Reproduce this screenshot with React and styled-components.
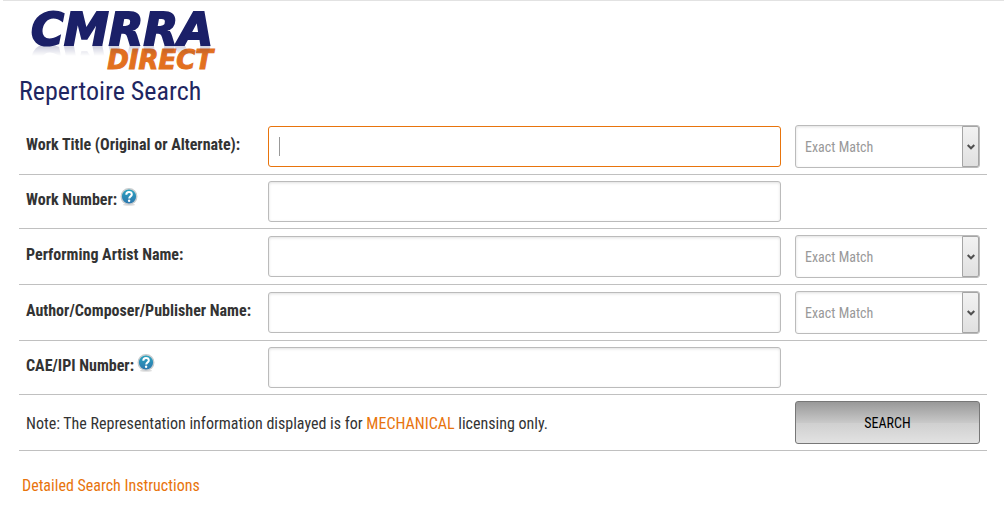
import React, { useState } from 'react';
import styled, { createGlobalStyle } from 'styled-components';

const GlobalStyle = createGlobalStyle`
  * {
    box-sizing: border-box;
  }
  body {
    margin: 0;
    background: #fff;
    color: #333;
    font-family: "Roboto Condensed", Roboto, sans-serif;
    font-size: 16px;
    line-height: 20px;
  }
  input, select, button {
    font-family: inherit;
  }
`;

const Page = styled.main`
  margin-left: 3px;
  padding: 12px 17px 32px 16px;
  border-top: 1px solid #e2e2e2;
`;

const Logo = styled.div`
  display: flex;
  flex-direction: column;
  align-items: flex-end;
  gap: 3px;
  width: 194px;
  height: 59px;
  font-family: "DejaVu Sans", sans-serif;
  font-style: italic;
  font-weight: bold;
`;

const LogoName = styled.span`
  height: 34px;
  color: #1b2068;
  font-size: 45px;
  line-height: 34px;
  -webkit-text-stroke: 2px #1b2068;
  -webkit-box-reflect: below -3px linear-gradient(transparent 65%, rgba(0, 0, 0, 0.25));
`;

const LogoProduct = styled.span`
  color: #e2701f;
  font-size: 26px;
  line-height: 21px;
  -webkit-text-stroke: 1px #e2701f;
`;

const Title = styled.h1`
  margin: 4px 0 13px;
  color: #1f2661;
  font-size: 26px;
  font-weight: 400;
  line-height: 30px;
`;

const Row = styled.div`
  display: grid;
  grid-template-columns: 228px 1fr 185px;
  column-gap: 14px;
  align-items: center;
  padding: 6px 7px;
  border-bottom: 1px solid #c0c0c0;
`;

const LabelCell = styled.div`
  display: flex;
  align-items: flex-start;
  gap: 3px;
  height: 27px;
  font-weight: 700;
  white-space: nowrap;

  label {
    padding-top: 2px;
  }
`;

const TextInput = styled.input`
  width: 100%;
  height: 41px;
  padding: 0 10px;
  border: 1px solid #bbb;
  border-radius: 3px;
  outline: none;
  background: #fff;
  box-shadow: inset 0 1px 3px rgba(0, 0, 0, 0.12);
  color: #333;
  font-size: 15px;

  &:focus {
    border-color: #e8740c;
    box-shadow: none;
  }
  &:focus:placeholder-shown {
    background: linear-gradient(#999, #999) 10px center / 1px 19px no-repeat #fff;
    caret-color: transparent;
  }
`;

const SelectBox = styled.div`
  display: grid;
  height: 43px;
  border: 1px solid #bbb;
  border-radius: 3px;
  background: #fff;
  box-shadow: inset 0 1px 3px rgba(0, 0, 0, 0.12);

  > * {
    grid-area: 1 / 1;
  }
`;

const Select = styled.select`
  appearance: none;
  width: 100%;
  padding: 0 28px 0 9px;
  border: 0;
  background: transparent;
  color: #999;
  font-size: 14px;
`;

const SelectArrow = styled.span`
  display: flex;
  align-items: center;
  justify-content: center;
  justify-self: end;
  width: 17px;
  border: 1px solid #a5a5a5;
  border-radius: 0 2px 2px 0;
  background: linear-gradient(#f2f2f2, #e0e0e0);
  pointer-events: none;
`;

const Note = styled.p`
  grid-column: 1 / 3;
  margin: 0;
  padding-top: 2px;
`;

const Highlight = styled.span`
  color: #e8740c;
`;

const SearchButton = styled.button`
  height: 43px;
  border: 1px solid #777;
  border-radius: 3px;
  background: linear-gradient(#999, #c8c8c8 50%, #cfcfcf 50%, #e2e2e2);
  color: #000;
  font-size: 14px;
  cursor: pointer;
`;

const Instructions = styled.a`
  display: inline-block;
  margin: 25px 3px 0;
  color: #e8740c;
  text-decoration: none;
`;

const HelpIcon = () => (
  <svg width="18" height="18" viewBox="0 0 18 18" role="img" aria-label="Help">
    <defs>
      <linearGradient id="help" x1="0" y1="0" x2="0" y2="1">
        <stop offset="0" stopColor="#2ba5c0" />
        <stop offset="1" stopColor="#2d74ad" />
      </linearGradient>
    </defs>
    <ellipse cx="9" cy="16.8" rx="6" ry="1" fill="#ddd" />
    <circle cx="9" cy="8.5" r="7.8" fill="url(#help)" stroke="#c9cdcf" strokeWidth="1.4" />
    <path
      d="M6.3 6.7C6.3 4.9 7.4 4 9 4s2.8.9 2.8 2.4c0 1.9-2.6 2-2.6 4"
      fill="none"
      stroke="#fff"
      strokeWidth="2"
    />
    <circle cx="9.1" cy="12.7" r="1.2" fill="#fff" />
  </svg>
);

const fields = [
  { id: "title", label: "Work Title (Original or Alternate):", match: true },
  { id: "number", label: "Work Number:", help: true },
  { id: "artist", label: "Performing Artist Name:", match: true },
  { id: "author", label: "Author/Composer/Publisher Name:", match: true },
  { id: "ipi", label: "CAE/IPI Number:", help: true }
];

const MatchSelect = ({ label }) => (
  <SelectBox>
    <Select aria-label={`${label} match type`}>
      <option>Exact Match</option>
      <option>Contains</option>
      <option>Starts With</option>
    </Select>
    <SelectArrow>
      <svg width="8" height="6" viewBox="0 0 8 6">
        <path d="M.7 1 4 4.3 7.3 1" fill="none" stroke="#505050" strokeWidth="2" />
      </svg>
    </SelectArrow>
  </SelectBox>
);

export default () => {
  const [values, setValues] = useState({});

  return (
    <Page>
      <GlobalStyle />
      <Logo>
        <LogoName>CMRRA</LogoName>
        <LogoProduct>DIRECT</LogoProduct>
      </Logo>
      <Title>Repertoire Search</Title>
      <form onSubmit={e => e.preventDefault()}>
        {fields.map(({ id, label, help, match }, index) => (
          <Row key={id}>
            <LabelCell>
              <label htmlFor={id}>{label}</label>
              {help && <HelpIcon />}
            </LabelCell>
            <TextInput
              id={id}
              type="text"
              placeholder=" "
              autoFocus={index === 0}
              value={values[id] || ""}
              onChange={e => setValues({ ...values, [id]: e.target.value })}
            />
            {match && <MatchSelect label={label} />}
          </Row>
        ))}
        <Row>
          <Note>
            Note: The Representation information displayed is for{" "}
            <Highlight>MECHANICAL</Highlight> licensing only.
          </Note>
          <SearchButton type="submit">SEARCH</SearchButton>
        </Row>
      </form>
      <Instructions href="#instructions">Detailed Search Instructions</Instructions>
    </Page>
  );
}
